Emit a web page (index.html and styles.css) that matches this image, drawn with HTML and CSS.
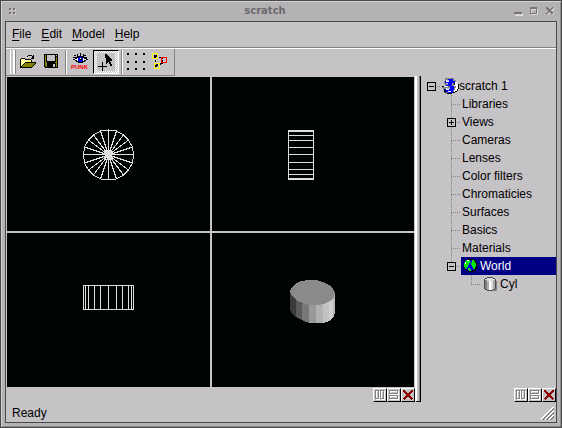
FILE: index.html
```html
<!DOCTYPE html>
<html lang="en">
<head>
<meta charset="utf-8">
<title>scratch</title>
<link rel="stylesheet" href="styles.css">
</head>
<body>
<div class="window">
  <header class="titlebar">
    <svg class="grip" width="7" height="7" aria-hidden="true"><path fill="#777377" d="M0 0h2v2h-2zM4 0h2v2h-2zM0 4h2v2h-2zM4 4h2v2h-2z"/><path fill="#d0ced0" d="M2 1h1v2h-2v-1h1zM6 1h1v2h-2v-1h1zM2 5h1v2h-2v-1h1zM6 5h1v2h-2v-1h1z"/></svg>
    <h1>scratch</h1>
    <div class="window-controls">
      <button aria-label="Minimize"><svg width="9" height="9"><path fill="#dcdadc" d="M1 6h8v3h-8z"/><path fill="#777377" d="M0 5h8v2h-8z"/></svg></button>
      <button aria-label="Maximize"><svg width="9" height="9"><path fill="none" stroke="#dcdadc" d="M1.500 2.500h6v5h-6z"/><path fill="#777377" fill-rule="evenodd" d="M0 0h7v7h-7zM1 2v4h5v-4z"/></svg></button>
      <button aria-label="Close"><svg width="9" height="9"><path stroke="#dcdadc" stroke-width="2" d="M1.500 1.500l6 6M7.500 1.500l-6 6"/><path stroke="#777377" stroke-width="2" d="M.5.5l6.500 6.500M7 .5l-6.500 6.500"/></svg></button>
    </div>
  </header>
  <div class="client">
    <nav class="menubar">
      <button><u>F</u>ile</button>
      <button><u>E</u>dit</button>
      <button><u>M</u>odel</button>
      <button><u>H</u>elp</button>
    </nav>
    <div class="toolbar-row">
      <div class="toolbar">
        <span class="handle"></span>
        <button aria-label="Open"><svg width="18" height="18">
          <path fill="#000" d="M9 2h4v1h-4zM8 3h1v1h-1zM13 3h1v1h-1zM14 2h1v4h-3v-1h1v-1h1zM2 5h4v1h-4zM1 6h1v9h-1zM6 6h6v1h-6zM12 7h1v2h-1zM6 9h11v1h-11zM5 10h1v1h-1zM4 11h1v1h-1zM3 12h1v1h-1zM2 13h1v1h-1zM16 10h1v1h-1zM15 11h1v1h-1zM14 12h1v1h-1zM13 13h1v1h-1zM1 14h12v1h-12z"/>
          <path fill="#ffff52" d="M2 6h4v1h6v2h-6v1h-1v1h-1v1h-1v1h-1z"/>
          <path fill="#fff" d="M3 6h1v1h-1zM5 6h1v1h-1zM2 7h1v1h-1zM4 7h1v1h-1zM6 7h1v1h-1zM8 7h1v1h-1zM10 7h1v1h-1zM3 8h1v1h-1zM5 8h1v1h-1zM7 8h1v1h-1zM2 9h1v1h-1zM4 9h1v1h-1zM3 10h1v1h-1z"/>
          <path fill="#848200" d="M6 10h10v1h-1v1h-1v1h-1v1h-10v-1h1v-1h1v-1h1z"/>
        </svg></button>
        <button aria-label="Save"><svg width="18" height="18" viewBox="1 0 18 18">
          <path fill="#000" d="M2 1h14v14h-13v-1h-1z"/><path fill="#848200" d="M3 2h1v7h1v1h8v-1h1v-5h1v10h-1v-4h-9v4h-1v-1h-1z"/>
          <path fill="#c6c3c6" d="M5 2h8v6h-8zM14 2h1v1h-1zM11 11h2v3h-2z"/>
        </svg></button>
        <span class="separator"></span>
        <button aria-label="Render"><svg width="18" height="18">
          <path fill="none" stroke="#000" d="M6.500 1v2M9.500 0v3M12.500 1v2M3 2.500h2M15 2.500h-2M2 4.500h3M16 4.500h-3"/>
          <path fill="#000" d="M6 3h7v1h2v1h1v1h1v1h-2v1h-1v1h-2v1h-5v-1h-2v-1h-1v-1h-2v-1h2v-1h1v-1h1z"/><path fill="#fff" d="M6 5h7v1h2v1h-2v1h-2v1h-3v-1h-2v-1h-2v-1h2z"/><path fill="#00f" d="M8 4h3v1h1v3h-1v1h-3v-1h-1v-3h1z"/><path fill="#000" d="M9 5h2v2h-2z"/><path fill="#fff" d="M9 5h1v1h-1z"/>
          <text class="render-label" x="0" y="16">PUNK</text>
        </svg></button>
        <button class="toggled" aria-label="Select" aria-pressed="true"><svg width="18" height="18">
          <path fill="#000" d="M8 1h2v1h1v1h1v1h1v1h1v1h1v2h-2v1h1v2h1v2h-2v-2h-1v-2h-1v1h-1v1h-1v-6h-1zM5 9h1v4h4v1h-4v4h-1v-4h-4v-1h4z"/>
        </svg></button>
        <span class="separator"></span>
        <button aria-label="Grid"><svg width="18" height="18"><path fill="#000" d="M0 0h2v2h-2zM8 0h2v2h-2zM16 0h2v2h-2zM0 8h2v2h-2zM8 8h2v2h-2zM16 8h2v2h-2zM0 15h2v2h-2zM8 15h2v2h-2zM16 15h2v2h-2z"/></svg></button>
        <button aria-label="Edit points"><svg width="18" height="18">
          <path fill="#000" d="M3 2h3v2h-1v1h-2zM5 11h2v2h-1v1h-2v-2h1zM8 4h3v1h1v1h-2v-1h-2zM8 11h1v-1h2v-1h1v2h-2v1h-2zM10 7h2v2h-1v-1h-1zM4 7h1v2h-1z"/>
          <path fill="none" stroke="#ffff00" d="M1.500.5h5v5h-5zM3.500 10.500h5v5h-5z"/><path fill="none" stroke="#f00" d="M10.500 4.500h5v5h-5z"/>
        </svg></button>
      </div>
    </div>
    <div class="workspace">
      <main class="pane">
        <div class="views">
          <svg class="view" viewBox="0 0 203 154" role="img" aria-label="Top view">
            <g fill="none" stroke="#dedede">
              <path d="M126.500 78l-1-8-4-7-5-5-7-4-8-1-8 1-7 4-5 5-4 7-1 8 1 8 4 7 5 5 7 4 8 1 8-1 7-4 5-5 4-7z"/>
              <path d="M76 77.500h51M101.500 53v50M77.500 70l48 16M77.500 86l48-16M81.500 63l40 30M81.500 93l40-30M86.500 58l30 40M86.500 98l30-40M93.500 54l16 48M93.500 102l16-48"/>
            </g><circle cx="101.500" cy="77.500" r="4" fill="#dedede"/>
          </svg>
          <svg class="view" viewBox="0 0 202 154" role="img" aria-label="Side view">
            <path fill="none" stroke="#dedede" d="M76.500 53.500h25v49h-25zM76 54.500h26M76 58.500h26M76 63.500h26M76 70.500h26M76 77.500h26M76 85.500h26M76 92.500h26M76 97.500h26M76 101.500h26"/>
          </svg>
          <svg class="view" viewBox="0 0 203 154" role="img" aria-label="Front view">
            <path fill="none" stroke="#dedede" d="M76.500 52.500h50v24h-50zM78.500 52v25M81.500 52v25M87.500 52v25M93.500 52v25M101.500 52v25M109.500 52v25M115.500 52v25M121.500 52v25M124.500 52v25"/>
          </svg>
          <svg class="view" viewBox="0 0 202 154" role="img" aria-label="Perspective view">
            <path fill="#3a3a3a" d="M78 60l6 6v18l-4-3-2-4z"/><path fill="#5a5a5a" d="M84 66h6v21l-6-3z"/><path fill="#777" d="M90 68h7v22l-7-3z"/><path fill="#999" d="M97 70h7v20h-7z"/><path fill="#b1b1b1" d="M104 70h7v20h-7z"/><path fill="#c2c2c2" d="M111 68h6v20l-6 2z"/><path fill="#cecece" d="M117 66h4v19l-4 3z"/><path fill="#bababa" d="M121 63l2-3v20l-2 5z"/>
            <path fill="#8a8a8a" d="M97 47h7l7 2 6 3 4 4 2 4-1 4-4 4-6 3-7 1h-7l-7-2-7-3-4-4-2-4 1-4 4-4 6-3z"/>
          </svg>
        </div>
        <div class="pane-buttons">
          <button aria-label="Split view left and right"><svg width="10" height="10"><path fill="none" stroke="#fff" d="M1.500 1.500h3v8h-3zM6.500 1.500h3v8h-3z"/><path fill="none" stroke="#848284" d="M.5.5h3v8h-3zM5.500.5h3v8h-3z"/></svg></button>
          <button aria-label="Split view top and bottom"><svg width="10" height="10"><path fill="none" stroke="#fff" d="M1.500 1.500h8v3h-8zM1.500 6.500h8v3h-8z"/><path fill="none" stroke="#848284" d="M.5.5h8v3h-8zM.5 5.500h8v3h-8z"/></svg></button>
          <button aria-label="Close view"><svg width="10" height="10"><path fill="none" stroke="#8b0000" stroke-width="2" d="M.5.5l9 9M9.500.5l-9 9"/></svg></button>
        </div>
      </main>
      <div class="splitter"></div>
      <aside class="sidebar">
        <ul class="tree">
          <li class="root">
            <div class="row"><button class="toggle minus" aria-label="Collapse scratch 1"></button><span class="label">
              <svg width="17" height="17"><path fill="#848284" d="M3 0h9v2h2v3h-2v3h2v4h-2v3h-3v1h-5v-1h-2v-3h-1v-2h-1v-2h3v-2h-1v-3h1z"/><path fill="#00f" d="M6 1h5v2h2v2h-3v3h-6v-1h2v-2h-3v-2h3zM8 8h4v4h-1v3h-5v-1h-3v-3h5z"/><path fill="#fff" d="M4 2h3v2h-3zM2 8h4v1h-4zM4 10h3v2h-3zM6 13h3v1h-3zM13 4h2v2h1v5h-1v2h-2v1h-1v-2h1v-2h1v-2h-2v-2h1z"/><path fill="#000" d="M0 8h2v1h-2zM2 11h1v2h1v2h-1v-1h-1zM5 15h5v1h-5zM16 6h1v5h-1zM15 11h1v2h-1zM13 13h2v1h-2zM11 14h2v1h-2zM12 5h1v2h-1z"/><path fill="#b5b2ff" d="M5 2h2v1h-2zM4 5h2v1h-2zM5 10h3v1h-3z"/></svg>scratch 1</span></div>
            <ul>
              <li><div class="row"><span class="label">Libraries</span></div></li>
              <li><div class="row"><button class="toggle plus" aria-label="Expand Views"></button><span class="label">Views</span></div></li>
              <li><div class="row"><span class="label">Cameras</span></div></li>
              <li><div class="row"><span class="label">Lenses</span></div></li>
              <li><div class="row"><span class="label">Color filters</span></div></li>
              <li><div class="row"><span class="label">Chromaticies</span></div></li>
              <li><div class="row"><span class="label">Surfaces</span></div></li>
              <li><div class="row"><span class="label">Basics</span></div></li>
              <li><div class="row"><span class="label">Materials</span></div></li>
              <li><div class="row"><button class="toggle minus" aria-label="Collapse World"></button><span class="label selected">
                <svg width="16" height="14"><path fill="#000" d="M6 0h5v1h2v1h1v2h1v6h-1v2h-2v1h-6v-1h-2v-1h-1v-2h-1v-4h1v-2h1v-1h2z"/><path fill="#0000e0" d="M6 1h4v1h2v2h1v5h-1v2h-2v1h-4v-1h-2v-2h-1v-4h1v-2h2z"/><path fill="#00e800" d="M4 1h4v2h1v1h-2v2h-1v2h-1v1h-1v1h-1v-2h-1v-4h1v-2h1zM10 1h2v1h1v2h1v4h-1v2h-2v-2h-1v-2h-1v-2h1zM6 9h2v1h1v2h-2v-1h-1z"/><path fill="#fff" d="M5 1h2v1h-2zM3 3h1v2h-1z"/></svg>World</span></div>
                <ul>
                  <li><div class="row"><span class="label">
                    <svg width="14" height="15"><path fill="#848284" d="M11 4h2v10h-9v-1h7z"/><path fill="#4a484a" d="M3 0h6v1h2v1h1v10h-1v1h-2v1h-6v-1h-2v-1h-1v-10h1v-1h2z"/><path fill="#848284" d="M1 3h2v9h-2z"/><path fill="#adaaad" d="M3 3h2v10h-2z"/><path fill="#fff" d="M5 3h2v10h-2z"/><path fill="#dedbde" d="M7 3h2v10h-2z"/><path fill="#adaaad" d="M9 3h2v9h-2z"/><path fill="#dedbde" d="M3 1h6v1h2v1h-2v1h-6v-1h-2v-1h2z"/></svg>Cyl</span></div></li>
                </ul>
              </li>
            </ul>
          </li>
        </ul>
        <div class="pane-buttons">
          <button aria-label="Split panel left and right"><svg width="10" height="10"><path fill="none" stroke="#fff" d="M1.500 1.500h3v8h-3zM6.500 1.500h3v8h-3z"/><path fill="none" stroke="#848284" d="M.5.5h3v8h-3zM5.500.5h3v8h-3z"/></svg></button>
          <button aria-label="Split panel top and bottom"><svg width="10" height="10"><path fill="none" stroke="#fff" d="M1.500 1.500h8v3h-8zM1.500 6.500h8v3h-8z"/><path fill="none" stroke="#848284" d="M.5.5h8v3h-8zM.5 5.500h8v3h-8z"/></svg></button>
          <button aria-label="Close panel"><svg width="10" height="10"><path fill="none" stroke="#8b0000" stroke-width="2" d="M.5.5l9 9M9.500.5l-9 9"/></svg></button>
        </div>
      </aside>
    </div>
    <footer class="statusbar"><span>Ready</span>
      <svg width="13" height="13" aria-hidden="true"><path stroke="#fff" d="M0 12.500L12.500 0M4 12.500L12.500 4M8 12.500L12.500 8"/><path stroke="#848284" stroke-width="2" d="M1.500 13L13 1.500M5.500 13L13 5.500M9.500 13L13 9.500"/></svg>
    </footer>
  </div>
</div>
</body>
</html>
```
FILE: styles.css
```css
* { box-sizing: border-box; }

body {
  margin: 0;
  font: 12px/18px "Liberation Sans", sans-serif;
  color: #000;
}

button {
  margin: 0;
  padding: 0;
  border: 0;
  background: none;
  font: inherit;
  color: inherit;
}

svg {
  display: block;
  flex: none;
  shape-rendering: crispEdges;
}

ul { margin: 0; padding: 0; list-style: none; }

.window {
  display: flex;
  flex-direction: column;
  min-height: 100vh;
  padding: 0 4px 4px;
  border: 1px solid #4a484a;
  background: #b5b2b5;
  box-shadow: inset 1px 1px #d6d3d6, inset -1px -1px #8c8a8c;
}

.titlebar {
  display: flex;
  align-items: center;
  height: 20px;
  padding: 0 2px 0 4px;
}

.titlebar h1 {
  flex: 1;
  margin: 0;
  font: bold 10px/18px "DejaVu Sans", sans-serif;
  text-align: center;
  color: #6b696b;
}

.window-controls {
  display: flex;
  gap: 7px;
}

.client {
  display: flex;
  flex: 1;
  flex-direction: column;
  border: 1px solid #4a484a;
  background: #c6c3c6;
}

.menubar {
  display: flex;
  align-items: flex-start;
  gap: 10px;
  height: 26px;
  padding: 3px 6px;
  border-bottom: 1px solid #848284;
}

.menubar u { text-underline-offset: 2px; }

.toolbar-row {
  display: flex;
  border-top: 1px solid #fff;
}

.toolbar {
  display: flex;
  align-items: center;
  gap: 2px;
  height: 27px;
  padding: 0 3px 0 4px;
  border-right: 1px solid #848284;
  border-bottom: 1px solid #848284;
}

.toolbar button { padding: 0 2px; }

.handle {
  width: 5px;
  height: 24px;
  border: solid #fff;
  border-width: 0 2px 0 1px;
  box-shadow: 1px 0 #848284;
}

.separator {
  width: 2px;
  height: 24px;
  border-left: 1px solid #848284;
  border-right: 1px solid #fff;
}

.toolbar .toggled {
  padding: 2px 3px;
  border: 1px solid;
  border-color: #000 #fff #fff #000;
  background:
    linear-gradient(#c6c3c6, #c6c3c6) center / 18px 18px no-repeat,
    repeating-conic-gradient(#fff 0 25%, #c6c3c6 0 50%) 0 0 / 2px 2px;
}

.render-label {
  font: bold 6px "Liberation Sans", sans-serif;
  fill: #f00;
}

.workspace {
  display: flex;
  flex: 1;
}

.pane {
  display: flex;
  flex: 1;
  flex-direction: column;
  min-width: 0;
}

.views {
  display: grid;
  flex: 1;
  grid-template: 1fr 1fr / 203fr 202fr;
  gap: 2px;
  margin: 1px 1px 0;
  background: #c6c3c6;
}

.view {
  width: 100%;
  height: 100%;
  background: #000400;
}

.pane-buttons {
  display: flex;
  justify-content: flex-end;
  padding-top: 1px;
}

.pane-buttons button {
  width: 14px;
  height: 14px;
  padding: 1px;
  border: 1px solid;
  border-color: #fff #000 #000 #fff;
}

.splitter {
  width: 6px;
  border: solid;
  border-width: 0 1px 1px 2px;
  border-color: #fff #000 #000 #fff;
  box-shadow: inset -1px 0 #848284;
}

.sidebar {
  display: flex;
  flex-direction: column;
  justify-content: space-between;
  width: 24%;
  min-width: 135px;
}

.tree { padding-top: 1px; }

.tree ul { margin-left: 30px; }

.tree li li {
  background: repeating-linear-gradient(#848284 0 1px, transparent 1px 2px) 0 0 / 1px 100% no-repeat;
}

.tree li li:last-child { background-size: 1px 10px; }

.tree li li li { margin-left: -10px; }

.row {
  position: relative;
  display: flex;
  height: 18px;
}

.row::before {
  content: "";
  width: 10px;
  height: 1px;
  margin-top: 9px;
  background: repeating-linear-gradient(90deg, #848284 0 1px, transparent 1px 2px);
}

.root > .row { margin-left: 10px; }

.label {
  display: flex;
  flex: 1;
  align-items: center;
  padding-left: 1px;
  white-space: nowrap;
}

.tree li li .label { gap: 2px; }

.tree li li li .label { padding-left: 3px; }

.selected { background: #000084; color: #fff; }

.toggle {
  position: absolute;
  top: 5px;
  left: -4px;
  width: 9px;
  height: 9px;
  border: 1px solid #000;
  background: linear-gradient(#000, #000) center / 5px 1px no-repeat, #c6c3c6;
}

.plus {
  background:
    linear-gradient(#000, #000) center / 5px 1px no-repeat,
    linear-gradient(#000, #000) center / 1px 5px no-repeat,
    #c6c3c6;
}

.statusbar {
  display: flex;
  align-items: center;
  justify-content: space-between;
  height: 20px;
  padding: 2px 2px 0 6px;
}
```
